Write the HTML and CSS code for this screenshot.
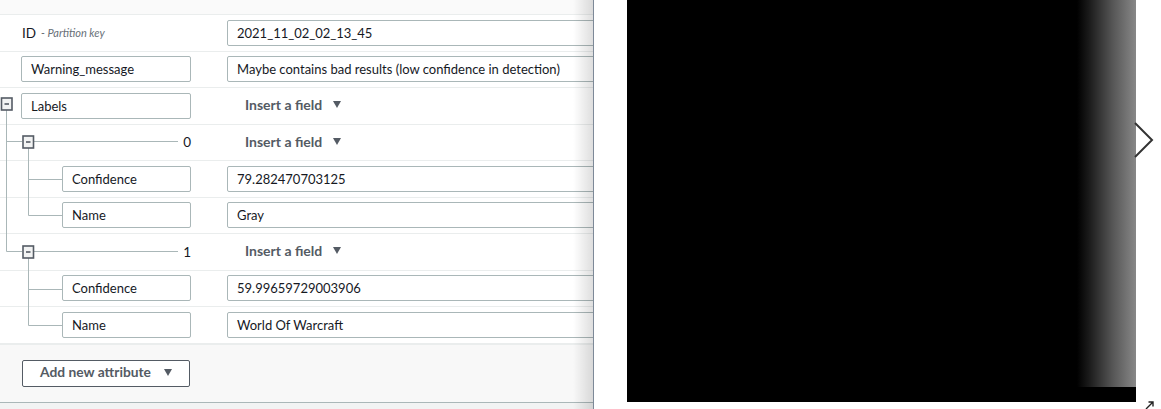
FILE: index.html
```html
<!DOCTYPE html>
<html>
<head>
<meta charset="utf-8">
<link rel="stylesheet" href="styles.css">
</head>
<body>
<div class="page">
  <section class="editor">
    <div class="editor-head"></div>
    <div class="rows">
      <div class="row">
        <div class="key key-text">ID <span class="hint">- Partition key</span></div>
        <div class="val"><div class="input">2021_11_02_02_13_45</div></div>
      </div>
      <div class="row">
        <div class="key"><div class="input key-input">Warning_message</div></div>
        <div class="val"><div class="input">Maybe contains bad results (low confidence in detection)</div></div>
      </div>
      <div class="row">
        <div class="key"><div class="input key-input">Labels</div></div>
        <div class="val"><span class="insert">Insert a field <span class="caret"></span></span></div>
      </div>
      <div class="row">
        <div class="key key-index">0</div>
        <div class="val"><span class="insert">Insert a field <span class="caret"></span></span></div>
      </div>
      <div class="row">
        <div class="key nested"><div class="input key-input small">Confidence</div></div>
        <div class="val"><div class="input">79.282470703125</div></div>
      </div>
      <div class="row">
        <div class="key nested"><div class="input key-input small">Name</div></div>
        <div class="val"><div class="input">Gray</div></div>
      </div>
      <div class="row">
        <div class="key key-index">1</div>
        <div class="val"><span class="insert">Insert a field <span class="caret"></span></span></div>
      </div>
      <div class="row">
        <div class="key nested"><div class="input key-input small">Confidence</div></div>
        <div class="val"><div class="input">59.99659729003906</div></div>
      </div>
      <div class="row">
        <div class="key nested"><div class="input key-input small">Name</div></div>
        <div class="val"><div class="input">World Of Warcraft</div></div>
      </div>
      <svg class="tree" width="200" height="260" viewBox="0 0 200 260">
        <g stroke="#aab7b8" stroke-width="1" fill="none">
          <line x1="6.5" y1="22" x2="6.5" y2="163.5"/>
          <line x1="6.5" y1="53.5" x2="22" y2="53.5"/>
          <line x1="33" y1="53.5" x2="178" y2="53.5"/>
          <line x1="28.5" y1="60" x2="28.5" y2="127.5"/>
          <line x1="28.5" y1="91.5" x2="62" y2="91.5"/>
          <line x1="28.5" y1="127.5" x2="62" y2="127.5"/>
          <line x1="6.5" y1="163.5" x2="22" y2="163.5"/>
          <line x1="33" y1="163.5" x2="178" y2="163.5"/>
          <line x1="28.5" y1="170" x2="28.5" y2="237.5"/>
          <line x1="28.5" y1="201.5" x2="62" y2="201.5"/>
          <line x1="28.5" y1="237.5" x2="62" y2="237.5"/>
        </g>
        <g class="tog">
          <rect x="1.5" y="10" width="10.5" height="12" fill="#f2f3f3" stroke="#545b64" stroke-width="1.6"/>
          <line x1="4.5" y1="16" x2="9" y2="16" stroke="#545b64" stroke-width="1.6"/>
          <rect x="23" y="48" width="10.5" height="12" fill="#f2f3f3" stroke="#545b64" stroke-width="1.6"/>
          <line x1="26" y1="54" x2="30.5" y2="54" stroke="#545b64" stroke-width="1.6"/>
          <rect x="23" y="158" width="10.5" height="12" fill="#f2f3f3" stroke="#545b64" stroke-width="1.6"/>
          <line x1="26" y1="164" x2="30.5" y2="164" stroke="#545b64" stroke-width="1.6"/>
        </g>
      </svg>
    </div>
    <div class="editor-foot">
      <button class="add-btn">Add new attribute <span class="caret"></span></button>
    </div>
    <div class="editor-bottom"></div>
  </section>
  <div class="spacer"></div>
  <section class="viewer">
    <div class="fade"></div>
  </section>
  <div class="side">
    <svg class="next" width="22" height="40" viewBox="0 0 22 40">
      <polyline points="2,1 19,18 2,35" fill="none" stroke="#333" stroke-width="2"/>
    </svg>
    <svg class="expand" width="10" height="10" viewBox="0 0 10 10">
      <path d="M1 9 L8 2 M3.5 2 H8 V6.5" fill="none" stroke="#222" stroke-width="1.4"/>
    </svg>
  </div>
</div>
</body>
</html>
```

FILE: styles.css
```css
* { box-sizing: border-box; }
html, body { margin: 0; padding: 0; background: #fff; }
body {
  font-family: Lato, Roboto, Arial, sans-serif;
  font-size: 13px;
  color: #16191f;
  width: 1161px;
  height: 409px;
  overflow: hidden;
}
.page { display: flex; height: 409px; }

.editor {
  width: 594px;
  flex: none;
  position: relative;
  border-right: 1px solid #7d8998;
  overflow: hidden;
  display: flex;
  flex-direction: column;
  background: #fff;
}
.editor::after {
  content: "";
  position: absolute;
  top: 0; right: 0; bottom: 0;
  width: 20px;
  background: linear-gradient(to right, rgba(0,0,0,0), rgba(0,0,0,0.13));
  pointer-events: none;
}
.editor-head {
  height: 15px;
  background: #fafafa;
  border-bottom: 1px solid #eaeded;
  flex: none;
}
.rows { position: relative; flex: none; }
.row {
  height: 36.5px;
  border-bottom: 1px solid #eaeded;
  display: flex;
  align-items: center;
}
.key {
  width: 227px;
  flex: none;
  padding-left: 21px;
  display: flex;
  align-items: center;
}
.key.nested { padding-left: 62px; }
.key-text { padding-left: 22px; font-size: 13.5px; }
.hint { font-style: italic; font-size: 11px; color: #687078; margin-left: 5px; }
.key-index {
  justify-content: flex-end;
  padding-right: 36px;
  color: #16191f;
  font-size: 13.5px;
}
.val { flex: none; width: 420px; display: flex; align-items: center; }
.input {
  height: 26px;
  width: 420px;
  border: 1px solid #aab7b8;
  border-radius: 2px;
  padding: 0 9px;
  display: flex;
  align-items: center;
  white-space: nowrap;
  background: #fff;
}
.key-input { width: 170px; }
.key-input.small { width: 129px; }
.insert {
  margin-left: 18px;
  margin-top: -2px;
  font-weight: 700;
  font-size: 14px;
  color: #545b64;
  display: inline-flex;
  align-items: center;
}
.caret {
  display: inline-block;
  width: 0; height: 0;
  border-left: 4.5px solid transparent;
  border-right: 4.5px solid transparent;
  border-top: 7px solid #545b64;
  margin-left: 11px;
}
.tree { position: absolute; left: 0; top: 73px; }

.editor-foot {
  flex: 1;
  background: #f8f8f8;
  border-top: 1px solid #eaeded;
  padding: 15px 0 0 22px;
}
.add-btn {
  font-family: inherit;
  font-size: 13.8px;
  font-weight: 700;
  color: #545b64;
  background: #fff;
  border: 1px solid #545b64;
  border-radius: 2px;
  width: 168px;
  height: 27px;
  display: flex;
  align-items: center;
  justify-content: center;
  padding: 0 0 3px 0;
}
.add-btn .caret { margin-left: 13px; margin-top: 2px; }
.editor-bottom {
  height: 7px;
  flex: none;
  border-top: 1px solid #aab7b8;
  background: #f2f3f3;
}

.spacer { width: 33px; flex: none; }
.viewer {
  width: 509px;
  height: 402px;
  flex: none;
  background: #000;
  position: relative;
}
.fade {
  position: absolute;
  top: 0; right: 0;
  width: 59px;
  height: 387px;
  background: linear-gradient(to right, #000 0%, #1a1a1a 20%, #555 60%, #888 100%);
}
.side { position: relative; flex: 1; }
.next { position: absolute; left: -3px; top: 122px; }
.expand { position: absolute; left: 9px; top: 400px; }
```
